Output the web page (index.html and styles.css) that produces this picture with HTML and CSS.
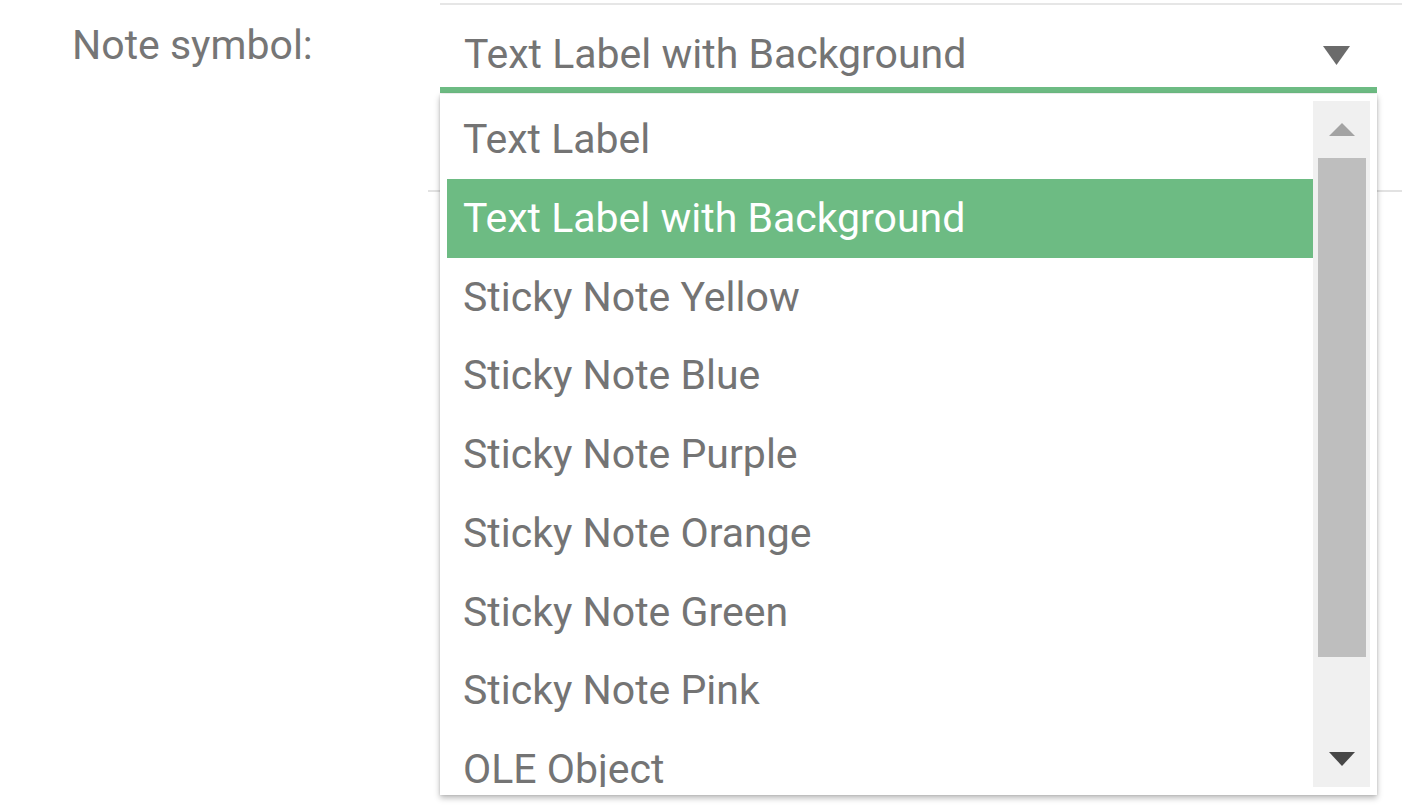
FILE: index.html
```html
<!DOCTYPE html>
<html lang="en">
<head>
<meta charset="utf-8">
<title>Note symbol</title>
<link rel="stylesheet" href="styles.css">
</head>
<body>
<div class="page">
  <div class="topline"></div>
  <div class="row">
    <div class="label">Note symbol:</div>
    <div class="select">
      <span class="select-value">Text Label with Background</span>
      <svg class="select-arrow" width="27" height="19" viewBox="0 0 27 19"><polygon points="0,0 27,0 13.5,19" fill="#6b6b6b"/></svg>
    </div>
  </div>
  <div class="sep"></div>

  <div class="dropdown">
    <ul class="list">
      <li class="item">Text Label</li>
      <li class="item selected">Text Label with Background</li>
      <li class="item">Sticky Note Yellow</li>
      <li class="item">Sticky Note Blue</li>
      <li class="item">Sticky Note Purple</li>
      <li class="item">Sticky Note Orange</li>
      <li class="item">Sticky Note Green</li>
      <li class="item">Sticky Note Pink</li>
      <li class="item">OLE Object</li>
    </ul>
    <div class="scrollbar">
      <div class="sb-up"><svg width="26" height="13" viewBox="0 0 26 13"><polygon points="13,0 26,13 0,13" fill="#a3a3a3"/></svg></div>
      <div class="sb-thumb"></div>
      <div class="sb-space"></div>
      <div class="sb-down"><svg width="26" height="14" viewBox="0 0 26 14"><polygon points="0,0 26,0 13,14" fill="#474747"/></svg></div>
    </div>
  </div>
</div>
</body>
</html>
```

FILE: styles.css
```css
* { box-sizing: border-box; }

html, body {
  margin: 0;
  padding: 0;
  background: #ffffff;
}

body {
  font-family: Roboto, "Noto Sans", "Liberation Sans", sans-serif;
  color: #767676;
  width: 1402px;
  height: 809px;
  overflow: hidden;
}

.page {
  position: relative;
  width: 1402px;
  height: 809px;
  padding-top: 3px;
}

.topline {
  margin-left: 440px;
  border-top: 2px solid #e6e6e6;
}

.row {
  display: flex;
  align-items: flex-start;
}

.label {
  width: 440px;
  padding-left: 72px;
  padding-top: 16px;
  font-size: 41px;
  line-height: 48px;
  color: #767676;
}

.select {
  width: 937px;
  height: 88px;
  display: flex;
  align-items: flex-start;
  justify-content: space-between;
  padding: 25px 27px 0 24px;
  border-bottom: 6px solid #6dbb83;
  font-size: 41px;
  line-height: 48px;
  color: #747474;
}

.select-arrow {
  display: block;
  margin-top: 16px;
}

.sep {
  margin-left: 428px;
  margin-top: 97px;
  border-top: 2px solid #e2e2e2;
}

.dropdown {
  position: absolute;
  left: 440px;
  top: 94px;
  width: 937px;
  height: 701px;
  background: #ffffff;
  padding: 6px 7px 8px 7px;
  display: flex;
  box-shadow: 0 3px 6px rgba(0, 0, 0, 0.28), 0 0 2px rgba(0, 0, 0, 0.12);
  z-index: 10;
}

.list {
  list-style: none;
  margin: 0;
  padding: 0;
  flex: 1;
  overflow: hidden;
}

.item {
  height: 78.75px;
  line-height: 78.75px;
  padding-left: 16px;
  font-size: 41px;
  color: #747474;
  white-space: nowrap;
}

.item.selected {
  background: #6dbb83;
  color: #ffffff;
}

.scrollbar {
  width: 57px;
  background: #f0f0f0;
  display: flex;
  flex-direction: column;
  align-items: center;
  margin-top: 1px;
}

.sb-up {
  height: 57px;
  padding-top: 22px;
}

.sb-up svg,
.sb-down svg {
  display: block;
}

.sb-thumb {
  width: 48px;
  height: 499px;
  background: #bebebe;
}

.sb-space {
  flex: 1;
}

.sb-down {
  padding-bottom: 21px;
}
```
